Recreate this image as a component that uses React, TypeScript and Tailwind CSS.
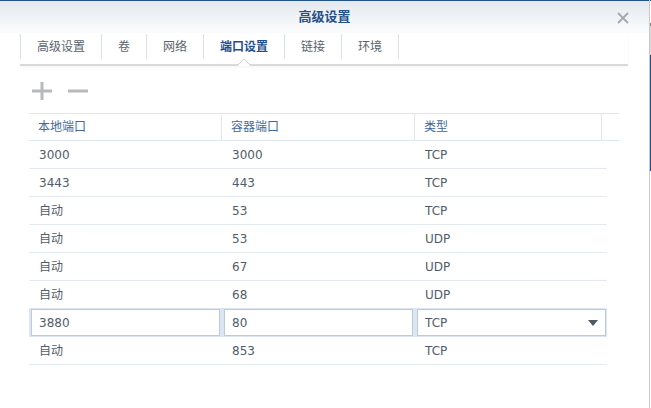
const tabs = ["高级设置", "卷", "网络", "端口设置", "链接", "环境"];

const rows = [
  { local: "3000", container: "3000", type: "TCP" },
  { local: "3443", container: "443", type: "TCP" },
  { local: "自动", container: "53", type: "TCP" },
  { local: "自动", container: "53", type: "UDP" },
  { local: "自动", container: "67", type: "UDP" },
  { local: "自动", container: "68", type: "UDP" },
  { local: "3880", container: "80", type: "TCP", editing: true },
  { local: "自动", container: "853", type: "TCP" },
];

function CloseIcon() {
  return (
    <svg width="12" height="12" viewBox="0 0 12 12">
      <path d="M1 1 L11 11 M11 1 L1 11" stroke="#a3a8ad" strokeWidth="1.8" />
    </svg>
  );
}

function App() {
  return (
    <div
      className="relative w-[651px] h-[408px] bg-white overflow-hidden flex"
      style={{ fontFamily: '"DejaVu Sans", "Noto Sans CJK SC", sans-serif' }}
    >
      {/* window */}
      <div className="w-[649px] h-full flex flex-col">
        <div className="h-[1px] bg-[#24528c]" />

        {/* Title bar */}
        <div className="h-[32px] relative flex items-center justify-center bg-gradient-to-b from-[#e4e9ef] to-[#fbfcfd]">
          <span className="text-[13px] font-bold text-[#24518a]">高级设置</span>
          <div className="absolute right-[20px] top-[11px]">
            <CloseIcon />
          </div>
        </div>

        {/* Tabs */}
        <div className="h-[33px] ml-[20px] w-[608px] border-b-2 border-[#dadada] shadow-[0_1px_2px_rgba(0,0,0,0.05)]">
          <div className="flex h-[25px] mt-[1px]">
            {tabs.map((t, i) => (
              <div
                key={t}
                className={
                  "relative flex items-center px-4 border-l border-[#d9e1ea] text-[12px] " +
                  (i === tabs.length - 1 ? "border-r " : "") +
                  (i === 3 ? "text-[#1f4f8f] font-bold" : "text-[#5a636d]")
                }
              >
                {t}
                {i === 3 && (
                  <svg
                    className="absolute left-[33px] top-[24px]"
                    width="14"
                    height="8"
                    viewBox="0 0 14 8"
                  >
                    <path d="M0 8 L7 1 L14 8 Z" fill="#ffffff" />
                    <path d="M0 8 L7 1 L14 8" fill="none" stroke="#d2d2d2" strokeWidth="1" />
                  </svg>
                )}
              </div>
            ))}
          </div>
        </div>

        {/* Toolbar */}
        <div className="h-[47px] flex items-start gap-[16px] pl-[32px] pt-[16px]">
          <svg width="20" height="18" viewBox="0 0 20 18">
            <rect x="0" y="7.5" width="20" height="3" fill="#b7babd" />
            <rect x="8.5" y="0" width="3" height="18" fill="#b7babd" />
          </svg>
          <svg width="20" height="18" viewBox="0 0 20 18">
            <rect x="0" y="7.5" width="20" height="3" fill="#b7babd" />
          </svg>
        </div>

        {/* Table */}
        <div className="ml-[29px] w-[590px]">
          <div className="flex h-[28px] border-y border-[#dfe6ee] text-[12px] text-[#41699a]">
            <div className="w-[193px] border-r border-[#dfe6ee] pl-[9px] flex items-center">本地端口</div>
            <div className="w-[193px] border-r border-[#dfe6ee] pl-[9px] flex items-center">容器端口</div>
            <div className="w-[187px] border-r border-[#dfe6ee] pl-[9px] flex items-center">类型</div>
            <div className="flex-1" />
          </div>

          <div className="w-[578px] text-[12px] text-[#535c66]">
            {rows.map((r, i) =>
              r.editing ? (
                <div key={i} className="flex gap-[4px] h-[29px] pl-[2px] py-[1px] bg-[#dbe6f2] -mt-[1px]">
                  <div className="w-[189px] bg-white border border-[#bccbdc] flex items-center pl-[7px]">{r.local}</div>
                  <div className="w-[189px] bg-white border border-[#bccbdc] flex items-center pl-[7px]">{r.container}</div>
                  <div className="w-[189px] bg-white border border-[#bccbdc] flex items-center justify-between pl-[7px] pr-[7px]">
                    <span>{r.type}</span>
                    <svg width="10" height="6" viewBox="0 0 10 6">
                      <path d="M0 0 L10 0 L5 6 Z" fill="#4f5964" />
                    </svg>
                  </div>
                </div>
              ) : (
                <div key={i} className="flex h-[28px] border-b border-[#e4eaf0]">
                  <div className="w-[193px] pl-[10px] flex items-center">{r.local}</div>
                  <div className="w-[193px] pl-[10px] flex items-center">{r.container}</div>
                  <div className="flex-1 pl-[10px] flex items-center">{r.type}</div>
                </div>
              )
            )}
          </div>
        </div>
      </div>

      {/* desktop edge */}
      <div className="w-[2px] h-full border-l border-[#c9c9c9] flex flex-col">
        <div className="h-[1px] bg-[#24528c]" />
        <div className="h-[22px]" />
        <div className="h-[3px] bg-[#8c8c8c]" />
        <div className="h-[29px] bg-[#d8d8d8]" />
        <div className="h-[116px] bg-[#1f4e89]" />
      </div>
    </div>
  );
}

export default App;
